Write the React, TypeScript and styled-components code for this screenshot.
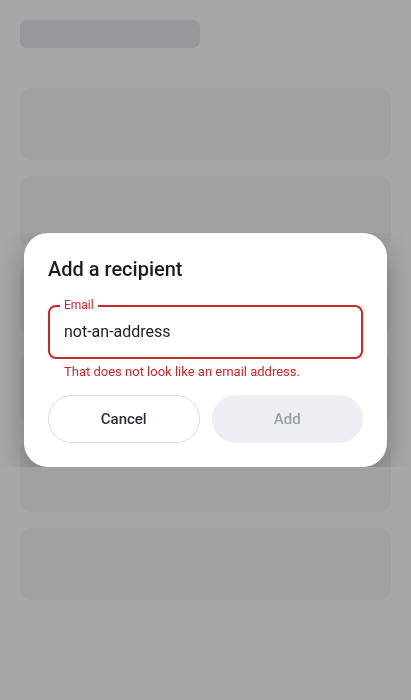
import React from "react";
import styled, { createGlobalStyle } from "styled-components";

const Global = createGlobalStyle`
  html, body { margin: 0; padding: 0; }
  body {
    background: #f6f7fa;
    font-family: Roboto, "Liberation Sans", sans-serif;
    -webkit-font-smoothing: antialiased;
  }
  * { box-sizing: border-box; }
`;

const Page = styled.div`
  display: flex;
  flex-direction: column;
  gap: 16px;
  padding: 20px;
  min-height: 700px;
`;

const TitleBar = styled.div`
  width: 180px;
  height: 28px;
  border-radius: 7px;
  background: #dee0e5;
  margin-bottom: 24px;
`;

const Card = styled.div`
  height: 72px;
  border-radius: 12px;
  background: #edeef1;
`;

const Overlay = styled.div`
  position: fixed;
  inset: 0;
  background: rgba(0, 0, 0, 0.32);
  display: flex;
  align-items: center;
`;

const ShadowClip = styled.div`
  width: 100%;
  overflow: hidden;
  padding: 0 24px;
`;

const Dialog = styled.div`
  background: #ffffff;
  border-radius: 24px;
  padding: 24px;
  box-shadow: 0 10px 32px rgba(0, 0, 0, 0.28);
  display: flex;
  flex-direction: column;
`;

const Heading = styled.h2`
  margin: 0 0 24px;
  font-size: 20px;
  line-height: 24px;
  font-weight: 500;
  color: #1d1d20;
`;

const Field = styled.div`
  position: relative;
  height: 54px;
  border: 2px solid #c62a26;
  border-radius: 8px;
  display: flex;
  align-items: center;
  padding: 0 14px;
`;

const FieldLabel = styled.span`
  position: absolute;
  top: -9px;
  left: 10px;
  padding: 0 4px;
  background: #ffffff;
  font-size: 12px;
  line-height: 14px;
  color: #c62a26;
`;

const Value = styled.span`
  font-size: 16px;
  line-height: 20px;
  color: #1f1f22;
`;

const ErrorText = styled.div`
  margin: 4px 0 0 16px;
  font-size: 13px;
  line-height: 18px;
  color: #c62a26;
`;

const Actions = styled.div`
  margin-top: 14px;
  display: grid;
  grid-template-columns: 1fr 1fr;
  gap: 12px;
`;

const Button = styled.button<{ $variant: "outline" | "disabled" }>`
  height: 48px;
  border-radius: 24px;
  font-family: inherit;
  font-size: 15px;
  font-weight: 500;
  border: 1px solid ${(p) => (p.$variant === "outline" ? "#dcdce3" : "#eceef2")};
  background: ${(p) => (p.$variant === "outline" ? "#ffffff" : "#eceef2")};
  color: ${(p) => (p.$variant === "outline" ? "#2b303b" : "#9aa0aa")};
`;

export default function App() {
  return (
    <>
      <Global />
      <Page>
        <TitleBar />
        {[0, 1, 2, 3, 4, 5].map((i) => (
          <Card key={i} />
        ))}
      </Page>
      <Overlay>
        <ShadowClip>
          <Dialog>
            <Heading>Add a recipient</Heading>
            <Field>
              <FieldLabel>Email</FieldLabel>
              <Value>not-an-address</Value>
            </Field>
            <ErrorText>That does not look like an email address.</ErrorText>
            <Actions>
              <Button $variant="outline">Cancel</Button>
              <Button $variant="disabled" disabled>
                Add
              </Button>
            </Actions>
          </Dialog>
        </ShadowClip>
      </Overlay>
    </>
  );
}
